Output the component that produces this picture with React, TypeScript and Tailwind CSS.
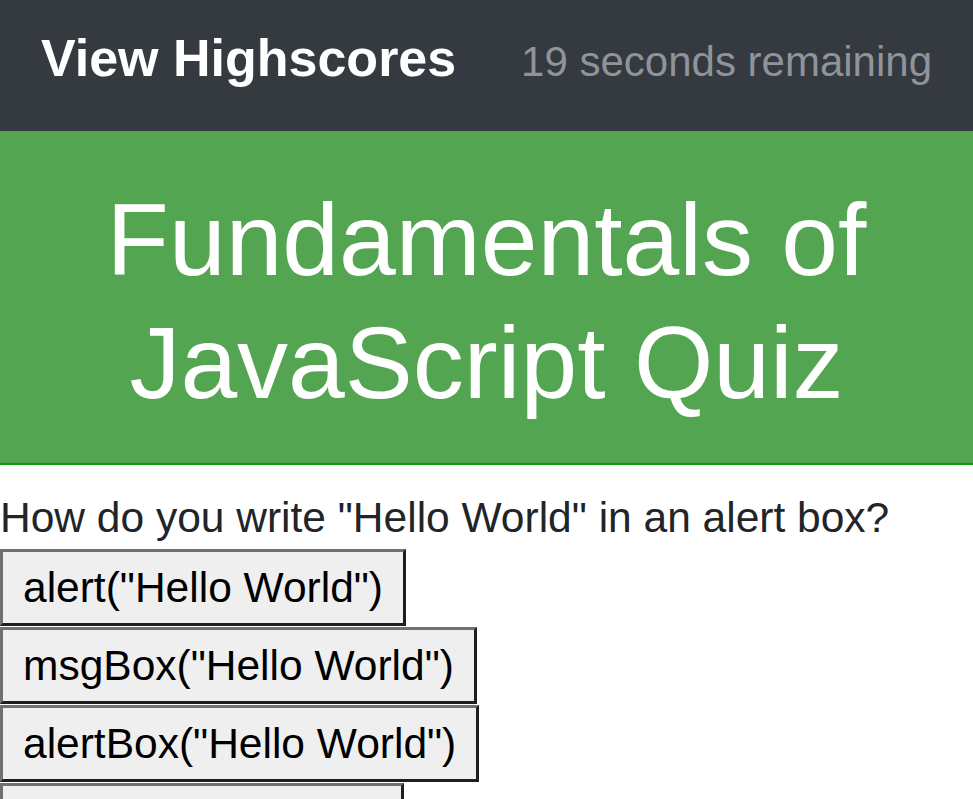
import React from "react";

const answers = [
  'alert("Hello World")',
  'msgBox("Hello World")',
  'alertBox("Hello World")',
  'msg("Hello World")',
];

export default function App() {
  return (
    <div className="min-h-screen bg-white" style={{ fontFamily: "'Liberation Sans', Arial, sans-serif" }}>
      <nav className="flex h-[131px] items-baseline justify-between bg-[#343a40] px-[41px] pt-[32px]">
        <a className="text-[52px] font-bold leading-none text-white">View Highscores</a>
        <span className="text-[42px] leading-none text-[#8f9499]">19 seconds remaining</span>
      </nav>

      <header className="border-b-2 border-[#0c9a0c] bg-[#53a552] pb-[38px] pt-[48px] text-center">
        <h1 className="text-[102px] leading-[123px] text-white">
          Fundamentals of
          <br />
          JavaScript Quiz
        </h1>
      </header>

      <main>
        <p className="mt-[29px] text-[42.5px] leading-[48px] text-[#212529]">
          How do you write "Hello World" in an alert box?
        </p>
        <div className="mt-[7px] flex flex-col items-start gap-[1px]">
          {answers.map((a) => (
            <button
              key={a}
              className="h-[77px] border-[3px] border-b-[#1e1e1e] border-l-[#707070] border-r-[#1e1e1e] border-t-[#707070] bg-[#efefef] px-[20px] text-[42.5px] leading-[48px] text-black"
            >
              {a}
            </button>
          ))}
        </div>
      </main>
    </div>
  );
}
